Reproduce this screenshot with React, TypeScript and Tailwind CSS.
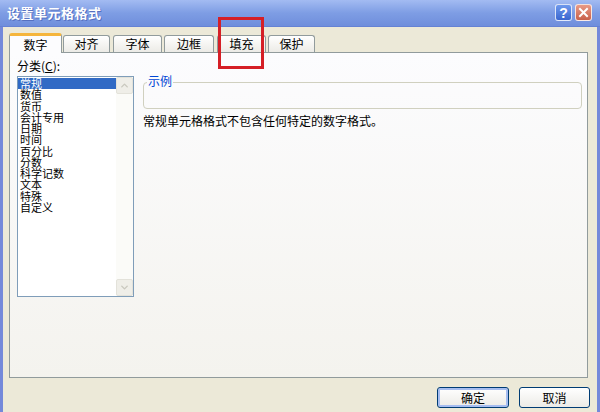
import { ChevronUp, ChevronDown } from "lucide-react";

const tabs = [
  { label: "数字", w: "w-[53px]", gap: "" },
  { label: "对齐", w: "w-[47px]", gap: "ml-[1px]" },
  { label: "字体", w: "w-[49px]", gap: "ml-[3px]" },
  { label: "边框", w: "w-[50px]", gap: "ml-[2px]" },
  { label: "填充", w: "w-[49px]", gap: "ml-[3px]" },
  { label: "保护", w: "w-[47px]", gap: "ml-[2px]" },
];

const categories = [
  "常规",
  "数值",
  "货币",
  "会计专用",
  "日期",
  "时间",
  "百分比",
  "分数",
  "科学记数",
  "文本",
  "特殊",
  "自定义",
];

const TitleButton = ({ kind }: { kind: "help" | "close" }) => (
  <div
    className={
      kind === "help"
        ? "w-[17px] h-[17px] rounded-[3px] border border-white/80 bg-gradient-to-b from-[#6E98EC] to-[#3B67CF] flex items-center justify-center text-white text-[14px] font-bold leading-none"
        : "w-[17px] h-[17px] rounded-[3px] border border-white/80 bg-gradient-to-b from-[#E99A86] to-[#C8604A] flex items-center justify-center"
    }
  >
    {kind === "help" ? (
      <span className="font-['Liberation_Sans',sans-serif] mt-[1px]">?</span>
    ) : (
      <svg width="11" height="11" viewBox="0 0 11 11">
        <path d="M2 2 L9 9 M9 2 L2 9" stroke="white" strokeWidth="2" strokeLinecap="square" />
      </svg>
    )}
  </div>
);

const ScrollArrow = ({ up }: { up?: boolean }) => (
  <div className="h-[17px] w-full rounded-[2px] border border-[#E3E2DA] bg-[#EFEEE8] flex items-center justify-center">
    {up ? (
      <ChevronUp className="w-[11px] h-[11px] text-[#C9C8BE]" strokeWidth={3} />
    ) : (
      <ChevronDown className="w-[11px] h-[11px] text-[#C9C8BE]" strokeWidth={3} />
    )}
  </div>
);

const App = () => {
  return (
    <div className="relative w-[600px] h-[412px] overflow-hidden flex flex-col font-['Noto_Sans_CJK_SC',sans-serif] text-[12px] text-black">
      {/* title bar */}
      <div className="h-[27px] shrink-0 flex items-center justify-between pl-[7px] pr-[8px] bg-gradient-to-b from-[#A3BBF2] via-[#7E9DE4] to-[#6F8EDC] border-b border-[#6582D4]">
        <span className="text-white text-[13px] font-bold tracking-[0.5px] [text-shadow:1px_1px_0_#5570C0]">
          设置单元格格式
        </span>
        <div className="flex items-center gap-[3px] mb-[1px]">
          <TitleButton kind="help" />
          <TitleButton kind="close" />
        </div>
      </div>

      {/* body */}
      <div className="flex-1 flex flex-col bg-[#ECE9D8] border-l-[3px] border-r-[3px] border-[#7489DA] pl-[6px] pr-[9px] pt-[6px]">
        {/* tabs */}
        <div className="h-[19px] flex items-end">
          {tabs.map((t, i) =>
            i === 0 ? (
              <div
                key={t.label}
                className={`${t.w} h-[20px] -mb-px relative z-10 rounded-t-[3px] border-x border-[#919B9C] border-t-[3px] border-t-[#F5B53C] bg-[#FCFCFE] flex items-center justify-center`}
              >
                {t.label}
              </div>
            ) : (
              <div
                key={t.label}
                className={`${t.w} ${t.gap} h-[17px] rounded-t-[3px] border-x border-t border-[#919B9C] bg-gradient-to-b from-white to-[#ECEBE6] flex items-center justify-center`}
              >
                {t.label}
              </div>
            )
          )}
        </div>

        {/* tab panel */}
        <div className="h-[326px] flex border border-[#919B9C] bg-gradient-to-b from-[#FCFCFE] to-[#F4F3EE]">
          <div className="pl-[7px] pt-[6px] flex flex-col">
            <div className="leading-[14px]">
              分类(<span className="underline">C</span>):
            </div>
            <div className="mt-[3px] w-[117px] h-[221px] border border-[#7F9DB9] bg-white flex">
              <div className="flex-1 pt-[1px] text-[11px]">
                {categories.map((c, i) => (
                  <div
                    key={c}
                    className={
                      i === 0
                        ? "h-[11.25px] leading-[11.25px] pl-[2px] bg-[#316AC5] text-white whitespace-nowrap"
                        : "h-[11.25px] leading-[11.25px] pl-[2px] whitespace-nowrap"
                    }
                  >
                    {c}
                  </div>
                ))}
              </div>
              <div className="w-[17px] flex flex-col bg-[#FBFBF8]">
                <ScrollArrow up />
                <div className="flex-1" />
                <ScrollArrow />
              </div>
            </div>
          </div>

          <div className="flex-1 ml-[9px] pr-[5px] pt-[29px] flex flex-col">
            <div className="relative h-[27px] rounded-[4px] border border-[#D0D0BF]">
              <span className="absolute -top-[9px] left-[3px] px-[1px] bg-[#FBFBFC] text-[#0046D5] leading-[14px]">
                示例
              </span>
            </div>
            <div className="mt-[5px] leading-[14px]">
              常规单元格格式不包含任何特定的数字格式。
            </div>
          </div>
        </div>

        {/* dialog buttons */}
        <div className="mt-[9px] -mr-[2px] flex justify-end gap-[10px]">
          <button className="w-[72px] h-[21px] rounded-[3px] border border-[#003C74] bg-gradient-to-b from-white to-[#ECEBE6] shadow-[inset_0_0_0_2px_#A6BDF0] flex items-center justify-center">
            确定
          </button>
          <button className="w-[71px] h-[21px] rounded-[3px] border border-[#003C74] bg-gradient-to-b from-white to-[#ECEBE6] flex items-center justify-center">
            取消
          </button>
        </div>
      </div>

      {/* red annotation box */}
      <div className="absolute left-[218px] top-[17px] w-[46px] h-[52px] border-[3px] border-[#D51F26]" />
    </div>
  );
};

export default App;
